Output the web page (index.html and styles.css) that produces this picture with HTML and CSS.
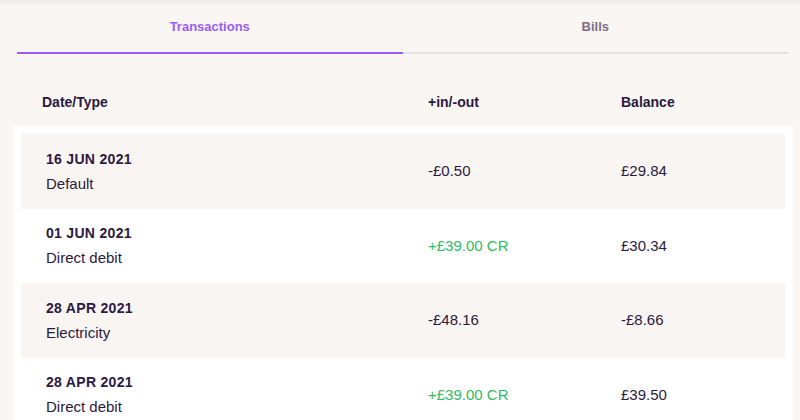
FILE: index.html
```html
<!DOCTYPE html>
<html lang="en">
<head>
<meta charset="utf-8">
<title>Transactions</title>
<link rel="stylesheet" href="styles.css">
</head>
<body>
<div class="page">
  <nav class="tabs">
    <div class="tab tab-active">Transactions</div>
    <div class="tab">Bills</div>
  </nav>
  <div class="thead">
    <div>Date/Type</div>
    <div>+in/-out</div>
    <div>Balance</div>
  </div>
  <div class="panel">
    <div class="row row-shaded">
      <div class="cell-date"><div class="date">16 JUN 2021</div><div class="type">Default</div></div>
      <div class="amount">-£0.50</div>
      <div class="balance">£29.84</div>
    </div>
    <div class="row">
      <div class="cell-date"><div class="date">01 JUN 2021</div><div class="type">Direct debit</div></div>
      <div class="amount credit">+£39.00 CR</div>
      <div class="balance">£30.34</div>
    </div>
    <div class="row row-shaded">
      <div class="cell-date"><div class="date">28 APR 2021</div><div class="type">Electricity</div></div>
      <div class="amount">-£48.16</div>
      <div class="balance">-£8.66</div>
    </div>
    <div class="row">
      <div class="cell-date"><div class="date">28 APR 2021</div><div class="type">Direct debit</div></div>
      <div class="amount credit">+£39.00 CR</div>
      <div class="balance">£39.50</div>
    </div>
  </div>
</div>
</body>
</html>
```
FILE: styles.css
```css
html, body {
  margin: 0;
  padding: 0;
}
body {
  background: #f9f6f3;
  font-family: "Liberation Sans", Arial, sans-serif;
  color: #2b1a3f;
  overflow: hidden;
}
.page {
  min-height: 420px;
  box-shadow: inset 0 7px 7px -6px rgba(60, 40, 30, 0.09);
}
.tabs {
  display: flex;
  margin: 0 12px 0 17px;
}
.tab {
  flex: 1;
  height: 33px;
  padding-top: 19px;
  line-height: 16px;
  text-align: center;
  font-size: 13px;
  font-weight: bold;
  color: #7d6d88;
  border-bottom: 2px solid #e4e1e3;
}
.tab-active {
  color: #9a5cf5;
  border-bottom-color: #9a5cf5;
}
.thead {
  display: grid;
  grid-template-columns: 386px 193px 1fr;
  margin-top: 40px;
  padding-left: 42px;
  font-size: 14px;
  font-weight: bold;
  line-height: 16px;
  height: 32px;
}
.panel {
  margin: 0 7px 0 13px;
  background: #ffffff;
  padding: 8px;
}
.row {
  display: grid;
  grid-template-columns: 382px 193px 1fr;
  align-items: center;
  padding-left: 25px;
  height: 74.5px;
}
.row-shaded {
  background: #f9f5f2;
}
.date {
  font-size: 14px;
  font-weight: bold;
  letter-spacing: 0.3px;
  line-height: 20px;
}
.type {
  font-size: 15px;
  line-height: 20px;
  margin-top: 5px;
}
.amount, .balance {
  font-size: 15px;
  line-height: 20px;
}
.credit {
  color: #2fbc62;
}
```
